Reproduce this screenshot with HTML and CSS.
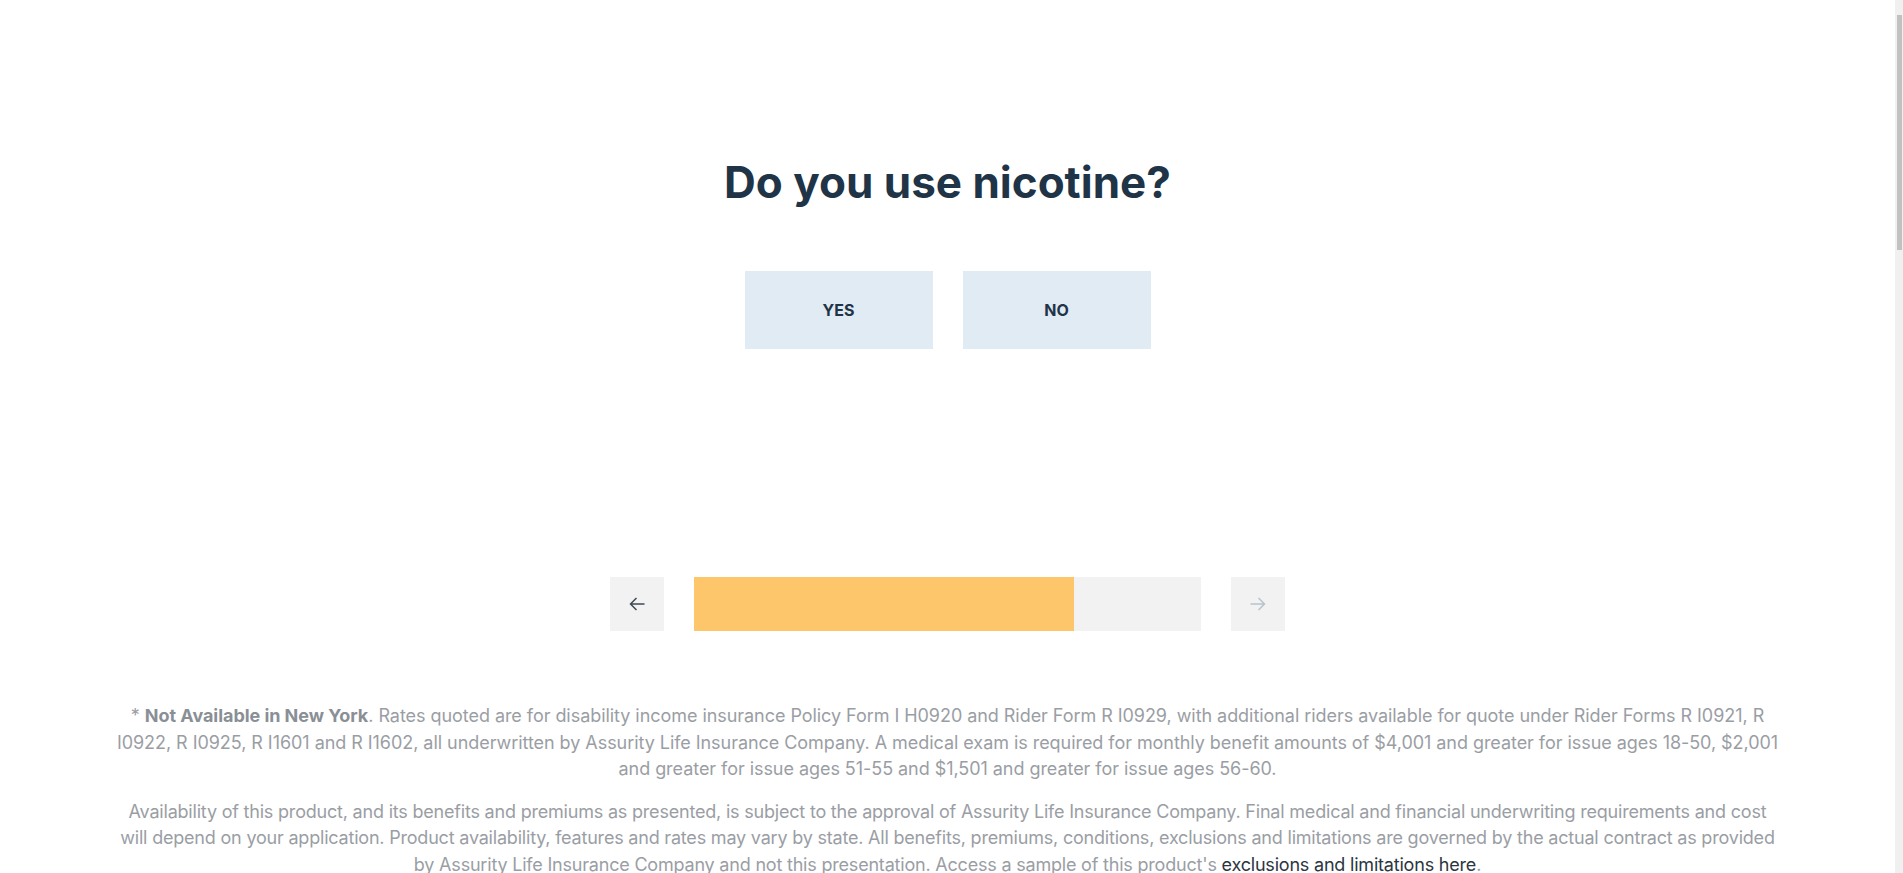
FILE: index.html
```html
<!DOCTYPE html>
<html lang="en">
  <head>
    <meta charset="UTF-8" />
    <meta name="viewport" content="width=device-width, initial-scale=1.0" />
    <title>Quote</title>
    <link rel="stylesheet" href="styles.css">
  </head>
  <body>
    <main class="quiz">
      <h1 class="pregunta">Do you use nicotine?</h1>
      <div class="opciones">
        <button class="opcion">YES</button>
        <button class="opcion">NO</button>
      </div>
      <div class="progreso">
        <button class="flecha">
          <svg width="16" height="16" viewBox="0 0 16 16"><path d="M15.5 8H1.5M7.5 2L1.5 8l6 6" fill="none" stroke="#3e4856" stroke-width="1.5"/></svg>
        </button>
        <div class="barra"><div class="relleno" style="width:75%"></div></div>
        <button class="flecha off">
          <svg width="16" height="16" viewBox="0 0 16 16"><path d="M0.5 8h14M8.5 2l6 6-6 6" fill="none" stroke="#b7c4cd" stroke-width="1.5"/></svg>
        </button>
      </div>
    </main>
    <footer class="legal">
      <p>* <b>Not Available in New York</b>. Rates quoted are for disability income insurance Policy Form I H0920 and Rider Form R I0929, with additional riders available for quote under Rider Forms R I0921, R I0922, R I0925, R I1601 and R I1602, all underwritten by Assurity Life Insurance Company. A medical exam is required for monthly benefit amounts of $4,001 and greater for issue ages 18-50, $2,001 and greater for issue ages 51-55 and $1,501 and greater for issue ages 56-60.</p>
      <p class="apretado">Availability of this product, and its benefits and premiums as presented, is subject to the approval of Assurity Life Insurance Company. Final medical and financial underwriting requirements and cost will depend on your application. Product availability, features and rates may vary by state. All benefits, premiums, conditions, exclusions and limitations are governed by the actual contract as provided by Assurity Life Insurance Company and not this presentation. Access a sample of this product's <a href="#">exclusions and limitations here</a>.</p>
      <div class="resto"></div>
    </footer>
    <div class="scroll" aria-hidden="true"><div class="pulgar"></div></div>
  </body>
</html>
```

FILE: styles.css
```css
body{
    margin: 0;
    padding-right: 8px;
    font-family: "Inter", sans-serif;
    color: #1f3447;
    background: #fff;
}
.scroll{
    position: fixed;
    top: 0;
    right: 0;
    width: 8px;
    height: 100vh;
    background-color: #f0f0f0;
}
.pulgar{
    margin: 15px 1px 0 2px;
    height: 235px;
    background-color: #c1c1c1;
}
.quiz{
    display: flex;
    flex-direction: column;
    align-items: center;
    padding-top: 150px;
}
.pregunta{
    margin: 0;
    font-size: 44px;
    font-weight: 700;
    line-height: 64px;
}
.opciones{
    display: flex;
    gap: 30px;
    margin-top: 57px;
}
.opcion{
    width: 188px;
    height: 78px;
    border: none;
    background-color: #e1ebf4;
    color: #1f3447;
    font-family: "Inter", sans-serif;
    font-size: 16px;
    font-weight: 700;
    cursor: pointer;
}
.progreso{
    display: flex;
    gap: 30px;
    margin-top: 228px;
}
.flecha{
    width: 54px;
    height: 54px;
    border: none;
    background-color: #f2f2f2;
    display: flex;
    align-items: center;
    justify-content: center;
    cursor: pointer;
}
.flecha.off{
    cursor: default;
}
.barra{
    width: 507px;
    height: 54px;
    background-color: #f2f2f2;
}
.relleno{
    height: 100%;
    background-color: #fec66a;
}
.legal{
    max-width: 1664px;
    margin: 72px auto 0;
    text-align: center;
    color: #9a9ea4;
    font-size: 18px;
    letter-spacing: -0.05px;
    line-height: 26.5px;
}
.legal p{
    margin: 0 0 16px;
}
.legal .apretado{
    letter-spacing: -0.2px;
}
.legal b{
    color: #8a8f96;
}
.legal a{
    color: #2b3640;
    text-decoration: none;
}
.resto{
    height: 2170px;
}
```
